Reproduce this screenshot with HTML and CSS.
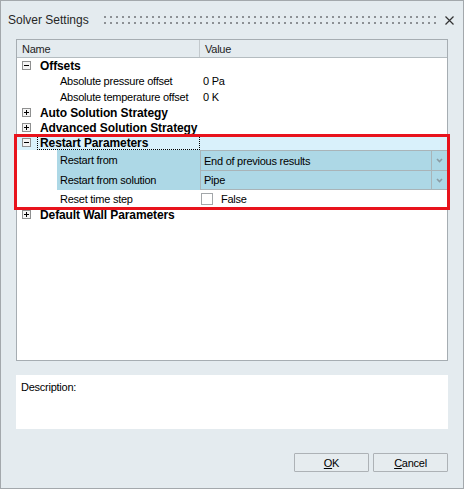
FILE: index.html
```html
<!DOCTYPE html>
<html lang="en">
<head>
  <meta charset="UTF-8">
  <title>Solver Settings</title>
  <link rel="stylesheet" href="styles.css">
</head>
<body>
  <div class="dialog">
    <div class="titlebar">
      <span class="title">Solver Settings</span>
      <svg class="grip" width="332" height="8" viewBox="0 0 332 8">
        <defs>
          <pattern id="dots" width="6" height="6" patternUnits="userSpaceOnUse">
            <rect x="0" y="0" width="2" height="2" fill="#8c9094"/>
          </pattern>
        </defs>
        <rect x="0" y="0" width="332" height="8" fill="url(#dots)"/>
      </svg>
      <svg class="close" width="9" height="9" viewBox="0 0 9 9">
        <path d="M0.5 0.5 L8.5 8.5 M8.5 0.5 L0.5 8.5" stroke="#333" stroke-width="1.2"/>
      </svg>
    </div>

    <div class="grid">
      <div class="grid-head">
        <span class="col-name">Name</span>
        <span class="col-value">Value</span>
      </div>

      <div class="group">
        <svg class="expander" width="9" height="9" viewBox="0 0 9 9"><rect x="0.5" y="0.5" width="8" height="8" fill="#f4f4f4" stroke="#8f9090"/><path d="M2 4.5 H7" stroke="#000"/></svg>
        <span>Offsets</span>
      </div>
      <div class="prop">
        <span class="pname">Absolute pressure offset</span>
        <span class="pvalue">0 Pa</span>
      </div>
      <div class="prop">
        <span class="pname">Absolute temperature offset</span>
        <span class="pvalue">0 K</span>
      </div>
      <div class="group">
        <svg class="expander" width="9" height="9" viewBox="0 0 9 9"><rect x="0.5" y="0.5" width="8" height="8" fill="#f4f4f4" stroke="#8f9090"/><path d="M2 4.5 H7 M4.5 2 V7" stroke="#000"/></svg>
        <span>Auto Solution Strategy</span>
      </div>
      <div class="group">
        <svg class="expander" width="9" height="9" viewBox="0 0 9 9"><rect x="0.5" y="0.5" width="8" height="8" fill="#f4f4f4" stroke="#8f9090"/><path d="M2 4.5 H7 M4.5 2 V7" stroke="#000"/></svg>
        <span>Advanced Solution Strategy</span>
      </div>

      <div class="marked">
        <div class="group selected">
          <svg class="expander" width="9" height="9" viewBox="0 0 9 9"><rect x="0.5" y="0.5" width="8" height="8" fill="#f4f4f4" stroke="#8f9090"/><path d="M2 4.5 H7" stroke="#000"/></svg>
          <span class="focus">Restart Parameters</span>
        </div>
        <div class="prop edit">
          <span class="pname">Restart from</span>
          <span class="pvalue">
            <span class="combo-text">End of previous results</span>
            <span class="drop"><svg width="7" height="5" viewBox="0 0 7 5"><path d="M1 1 L3.5 3.5 L6 1" fill="none" stroke="#8b9ca4" stroke-width="1.6"/></svg></span>
          </span>
        </div>
        <div class="prop edit last">
          <span class="pname">Restart from solution</span>
          <span class="pvalue">
            <span class="combo-text">Pipe</span>
            <span class="drop"><svg width="7" height="5" viewBox="0 0 7 5"><path d="M1 1 L3.5 3.5 L6 1" fill="none" stroke="#8b9ca4" stroke-width="1.6"/></svg></span>
          </span>
        </div>
        <div class="prop reset">
          <span class="pname">Reset time step</span>
          <span class="pvalue"><span class="check"></span>False</span>
        </div>
      </div>

      <div class="group">
        <svg class="expander" width="9" height="9" viewBox="0 0 9 9"><rect x="0.5" y="0.5" width="8" height="8" fill="#f4f4f4" stroke="#8f9090"/><path d="M2 4.5 H7 M4.5 2 V7" stroke="#000"/></svg>
        <span>Default Wall Parameters</span>
      </div>
    </div>

    <div class="description">Description:</div>

    <div class="buttons">
      <button type="button"><u>O</u>K</button>
      <button type="button"><u>C</u>ancel</button>
    </div>
  </div>
</body>
</html>
```

FILE: styles.css
```css
* {
  box-sizing: border-box;
}

body {
  margin: 0;
  font-family: "Liberation Sans", Arial, sans-serif;
}

.dialog {
  width: 464px;
  height: 489px;
  border: 1px solid #a3a8ac;
  background: #e4ebef;
  display: flex;
  flex-direction: column;
}

.titlebar {
  height: 38px;
  display: flex;
  align-items: center;
  padding: 0 9px 0 7px;

  .title {
    font-size: 12px;
    color: #262626;
  }

  .grip {
    margin-left: auto;
  }

  .close {
    margin-left: 9px;
  }
}

.grid {
  margin: 0 15px;
  height: 322px;
  border: 1px solid #a6adb2;
  background: #fff;
  font-size: 11px;
  letter-spacing: -0.25px;
  color: #000;
}

.grid-head {
  display: flex;
  height: 18px;
  background: #e4ebef;
  border-bottom: 1px solid #b4bcc0;
  color: #1e1e1e;

  span {
    display: flex;
    align-items: center;
    padding-left: 5px;
  }

  .col-name {
    width: 183px;
    border-right: 1px solid #c3c9cd;
  }
}

.group {
  display: flex;
  align-items: center;
  height: 15px;
  padding-left: 5px;
  font-size: 12px;
  font-weight: bold;
  letter-spacing: -0.1px;

  .expander {
    margin-right: 9px;
  }
}

.group.selected {
  background: #d9f1fb;

  .expander {
    margin-right: 6px;
  }

  .focus {
    display: flex;
    align-items: center;
    width: 163px;
    height: 14px;
    padding-left: 2px;
    border: 1px dotted #000;
  }
}

.prop {
  display: flex;
  height: 16px;

  span {
    display: flex;
    align-items: center;
  }

  .pname {
    margin-left: 40px;
    width: 143px;
    padding-left: 3px;
  }

  .pvalue {
    flex: 1;
    padding-left: 3px;
  }
}

.marked {
  position: relative;
}

.marked::after {
  content: "";
  position: absolute;
  top: -1px;
  left: -3px;
  right: -3px;
  bottom: -3px;
  border: 3px solid #e8131c;
  pointer-events: none;
}

.prop.edit {
  height: 20px;

  .pname {
    background: #add8e6;
  }

  .pvalue {
    padding-left: 3px;
    padding-right: 1px;
    background: #add8e6;
    border-top: 1px solid #a9b4b8;
    border-left: 1px solid #a9b4b8;
  }

  .combo-text {
    flex: 1;
    height: 100%;
  }

  .drop {
    width: 15px;
    height: 100%;
    justify-content: center;
    border-left: 1px solid #a9b4b8;
  }
}

.prop.edit.last .pvalue {
  border-bottom: 1px solid #a9b4b8;
}

.prop.reset {
  height: 17px;

  .pvalue {
    padding-left: 1px;
  }

  .check {
    width: 12px;
    height: 12px;
    margin-right: 8px;
    border: 1px solid #a3a7aa;
    background: #fff;
  }
}

.description {
  margin: 14px 15px 0;
  height: 54px;
  padding: 6px 5px;
  background: #fff;
  font-size: 11px;
  letter-spacing: -0.25px;
  color: #000;
}

.buttons {
  display: flex;
  justify-content: flex-end;
  gap: 4px;
  margin-top: 24px;
  padding-right: 15px;

  button {
    width: 75px;
    height: 19px;
    padding: 0;
    border: 1px solid #adb2b6;
    border-radius: 1px;
    background: #e6ecef;
    font-family: "Liberation Sans", Arial, sans-serif;
    font-size: 11px;
    letter-spacing: -0.25px;
    color: #000;
  }
}
```
